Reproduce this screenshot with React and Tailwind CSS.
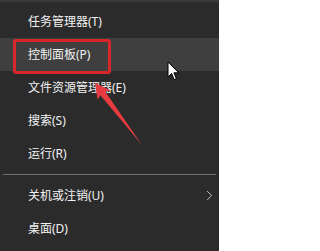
import { ChevronRight } from 'lucide-react';

const topItems = ['任务管理器(T)', '控制面板(P)', '文件资源管理器(E)', '搜索(S)', '运行(R)'];

function Row({ label, active, children }) {
  return (
    <div className={`relative flex items-center h-[33px] pl-[28px] pr-[4px] ${active ? 'bg-[#3f3f3f]' : ''}`}>
      <span className="text-[12px] leading-none text-[#f2f2f2]">{label}</span>
      {children}
    </div>
  );
}

export default function App() {
  return (
    <div
      className="relative w-[219px] h-[251px] overflow-hidden bg-[#2b2b2b] border-t-2 border-[#3a3a3a]"
      style={{ fontFamily: '"Noto Sans", "Noto Sans CJK SC", sans-serif' }}
    >
      <div className="pt-[3px]">
        {topItems.map((item, i) => (
          <Row key={item} label={item} active={i === 1}>
            {i === 1 && (
              <div className="absolute left-[13px] top-[1px] w-[98px] h-[35px] rounded-[3px] border-[3px] border-[#d8262d]" />
            )}
          </Row>
        ))}

        <div className="mx-[3px] mt-[4px] mb-[4px] h-px bg-[#707070]" />

        <Row label="关机或注销(U)">
          <ChevronRight className="absolute right-[1px] text-[#d0d0d0]" size={17} strokeWidth={1.3} />
        </Row>
        <Row label="桌面(D)" />
      </div>

      {/* red annotation arrow */}
      <svg className="absolute left-0 top-0" width="219" height="251" viewBox="0 0 219 251">
        <polygon
          points="95,81 110.4,88.2 105.2,89.6 142,143 100.4,93.2 97.6,97.8"
          fill="#e63b40"
        />
      </svg>

      {/* mouse pointer */}
      <svg className="absolute left-[167px] top-[59px]" width="14" height="21" viewBox="0 0 14 21">
        <path
          d="M1 1 L1 16 L4.6 12.6 L7.2 18.6 L9.4 17.6 L6.9 11.8 L11.8 11.8 Z"
          fill="#ffffff"
          stroke="#000000"
          strokeWidth="1"
          strokeLinejoin="round"
        />
      </svg>
    </div>
  );
}
